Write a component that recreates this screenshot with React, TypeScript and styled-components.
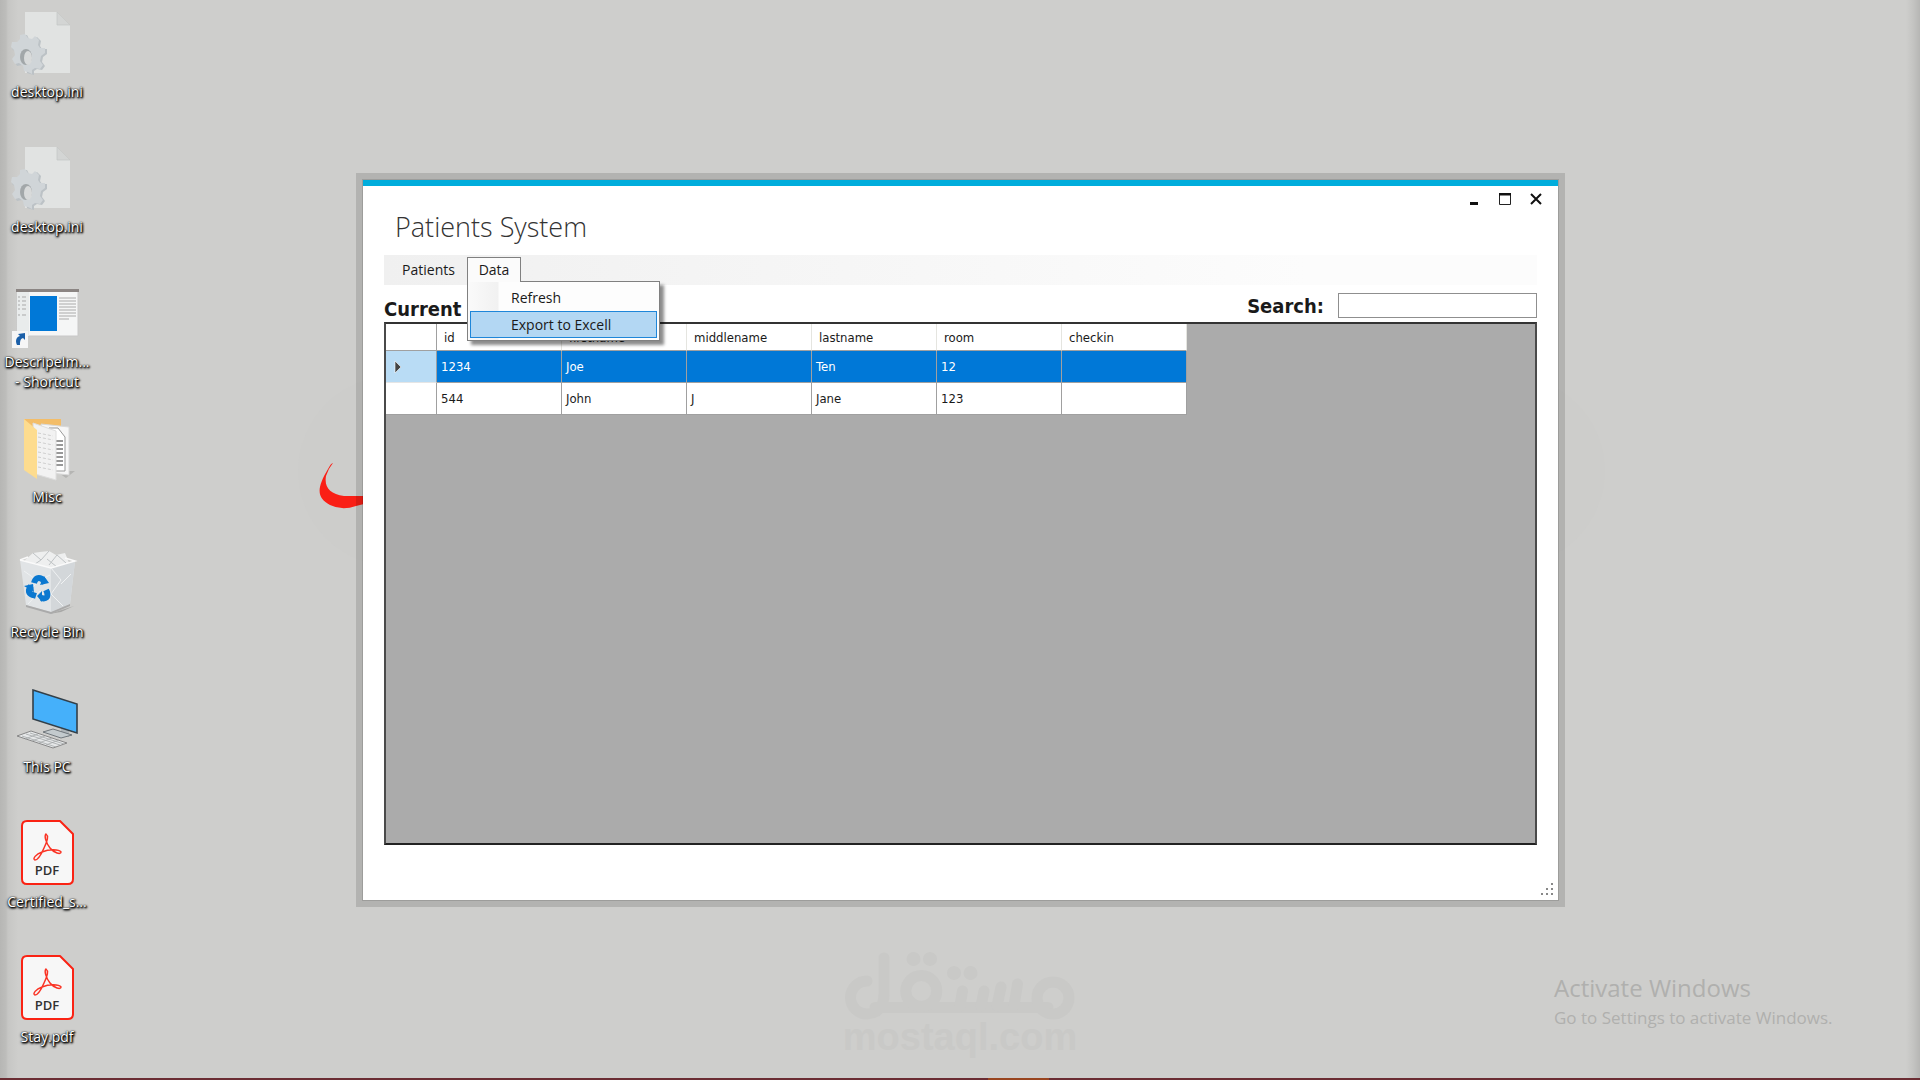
import React from 'react';
import styled, { createGlobalStyle } from 'styled-components';

const ui = '"Open Sans", "Noto Sans", sans-serif';
const tahoma = '"DejaVu Sans Condensed", "DejaVu Sans", sans-serif';

const GlobalStyle = createGlobalStyle`
  * { box-sizing: border-box; }
  body { margin: 0; background: #cececc; font-family: ${ui}; color: #1a1a1a; }
  button, input { font: inherit; color: inherit; }
`;

const Desktop = styled.main`
  position: relative;
  display: flex;
  flex-direction: column;
  height: 100vh;
  overflow: hidden;
  background: linear-gradient(90deg, #b6b6b4 0, #bdbdbb 6px, #c6c6c4 8px, #cececc 18px, #cececc calc(100% - 14px), #c4c4c2 calc(100% - 7px), #b6b6b4 100%);
`;

const IconColumn = styled.nav`
  display: grid;
  grid-auto-rows: 135px;
  width: 94px;
  flex: 1;
  min-height: 0;
`;

const Shortcut = styled.a`
  display: flex;
  flex-direction: column;
  align-items: center;
  padding-top: 8px;
  color: #fff;
  font-size: 14px;
  line-height: 20px;
  text-align: center;
  text-decoration: none;
  white-space: pre-line;
  text-shadow: 0 0 1px #000, 1px 1px 2px #000, 1px 1px 2px #000, 0 1px 3px #000;
  svg { display: block; width: 72px; height: 72px; margin-bottom: 2px; }
`;

const Taskbar = styled.footer`
  display: flex;
  flex: none;
  height: 2px;
  background: #6b2d33;
`;

const ActiveTask = styled.span`
  width: 61px;
  margin-left: 988px;
  background: #99451f;
`;

const WallpaperBand = styled.div`
  position: absolute;
  left: 298px;
  right: 315px;
  top: 376px;
  height: 190px;
  border-radius: 95px;
  background: #cdcdcb;
`;

const Swoosh = styled.svg`
  position: absolute;
  left: 316px;
  top: 460px;
  width: 56px;
  height: 52px;
`;

const Watermark = styled.div`
  position: absolute;
  left: 840px;
  top: 948px;
  width: 240px;
  color: #c9c9c7;
  text-align: center;
  svg { display: block; width: 240px; height: 76px; }
`;

const WatermarkText = styled.div`
  margin-top: -9px;
  font: bold 38px/44px "Liberation Sans", sans-serif;
`;

const Activation = styled.aside`
  position: absolute;
  left: 1554px;
  top: 970px;
  color: #b0b0ae;
`;

const ActivationTitle = styled.div`
  font-size: 24px;
  line-height: 36px;
`;

const ActivationText = styled.div`
  font-size: 17px;
  line-height: 24px;
`;

const AppWindow = styled.section`
  position: absolute;
  left: 363px;
  top: 180px;
  display: flex;
  flex-direction: column;
  width: 1195px;
  height: 720px;
  padding: 0 21px;
  background: #fff;
  border-top: 6px solid #00addc;
  box-shadow: 0 0 0 1px rgba(0, 0, 0, 0.12), 0 0 0 7px rgba(0, 0, 0, 0.13);
`;

const Caption = styled.div`
  display: flex;
  justify-content: flex-end;
  gap: 2px;
  height: 25px;
  margin-right: -13px;
`;

const CaptionButton = styled.button`
  width: 29px;
  height: 25px;
  padding: 0;
  border: 0;
  background: none;
  svg { display: block; margin: 6px auto; }
`;

const Title = styled.h1`
  margin: 0 0 12px 11px;
  font-size: 27px;
  font-weight: 300;
  line-height: 32px;
  color: #333;
`;

const MenuBar = styled.div`
  display: flex;
  height: 30px;
  padding: 2px 6px 3px;
  background: linear-gradient(90deg, #f0f0f0, #fcfcfc 80%);
  font-size: 14px;
`;

const MenuSlot = styled.div`
  position: relative;
`;

const MenuButton = styled.button<{ $open?: boolean }>`
  height: 25px;
  width: ${(p) => (p.$open ? '54px' : '77px')};
  padding: 0;
  border: 1px solid ${(p) => (p.$open ? '#808080' : 'transparent')};
  border-bottom: 0;
  background: ${(p) => (p.$open ? '#fbfbfb' : 'none')};
  line-height: 24px;
`;

const Menu = styled.div`
  position: absolute;
  z-index: 2;
  left: 0;
  top: 24px;
  display: grid;
  width: 193px;
  padding: 2px;
  border: 1px solid #808080;
  background: linear-gradient(90deg, #fafafa, #f1f1f1 30px, #fdfdfd 31px);
  box-shadow: 4px 4px 3px rgba(0, 0, 0, 0.45);
  &::before {
    content: '';
    position: absolute;
    left: 0;
    top: -1px;
    width: 52px;
    height: 1px;
    background: #fbfbfb;
  }
`;

const MenuItem = styled.button<{ $active?: boolean }>`
  height: 27px;
  padding: 0 0 0 40px;
  border: 1px solid ${(p) => (p.$active ? '#1e86d9' : 'transparent')};
  background: ${(p) => (p.$active ? '#b3d7f3' : 'none')};
  line-height: 24px;
  text-align: left;
`;

const Toolbar = styled.div`
  display: flex;
  justify-content: space-between;
  height: 37px;
  font: bold 20px/26px ${tahoma};
`;

const GridTitle = styled.h2`
  margin: 11px 0 0;
  font: inherit;
`;

const SearchField = styled.label`
  display: flex;
  gap: 14px;
  padding-top: 8px;
`;

const SearchInput = styled.input`
  width: 199px;
  height: 25px;
  padding: 0 4px;
  border: 1px solid #8f8f8f;
  background: #fff;
  font: 15px ${tahoma};
`;

const GridPane = styled.div`
  flex: 1;
  border: 2px solid #4a4a4a;
  border-top-color: #333;
  border-bottom-color: #222;
  background: #ababab;
`;

const DataGrid = styled.table`
  width: 801px;
  table-layout: fixed;
  border-collapse: separate;
  border-spacing: 0;
  background: #fff;
  font: 13px/18px ${tahoma};
`;

const HeadCell = styled.th<{ $corner?: boolean }>`
  width: ${(p) => (p.$corner ? '51px' : '125px')};
  height: 27px;
  padding: 1px 0 0 7px;
  border-right: 1px solid ${(p) => (p.$corner ? '#a0a0a0' : '#e5e5e0')};
  border-bottom: 1px solid #a0a0a0;
  font-weight: normal;
  text-align: left;
`;

const RowHead = styled.th<{ $selected?: boolean }>`
  padding: 0 0 0 8px;
  border-right: 1px solid #a0a0a0;
  border-bottom: 1px solid ${(p) => (p.$selected ? '#e5e5e5' : '#a0a0a0')};
  background: ${(p) => (p.$selected ? '#b9dcf5' : '#fff')};
  svg { display: block; }
`;

const Cell = styled.td<{ $selected?: boolean }>`
  height: 32px;
  padding: 0 0 0 4px;
  border-right: 1px solid #a0a0a0;
  border-bottom: 1px solid #a0a0a0;
  background: ${(p) => (p.$selected ? '#0078d7' : '#fff')};
  color: ${(p) => (p.$selected ? '#fff' : '#1a1a1a')};
`;

const StatusStrip = styled.div`
  display: flex;
  align-items: flex-end;
  justify-content: flex-end;
  height: 55px;
  margin-right: -17px;
  padding-bottom: 4px;
`;

const IniIcon = () => (
  <svg viewBox="0 0 72 72" aria-hidden="true">
    <path d="M14 4H46L59 17V65H14Z" fill="#e1e3e2" />
    <path d="M46 4V17H59Z" fill="#d3d5d4" stroke="#c3c5c4" strokeWidth=".7" />
    <path d="M19 66l-3-1-1-5-4-3-5 1-3-5 3-4-1-5-4-3 1-6 5 0 3-3 1-4 5-1 2 4 4 1 4-3 4 4-1 5 2 3 5 0 0 5-4 3-1 5 3 4-3 4-5-1-3 2 0 4Z" fill="#bcc2c6" />
    <path d="M17 65l-4-1-1-5-4-3-4 1-3-5 3-4-1-5-3-3 1-5 5 0 3-3 0-4 5-1 3 4 4 1 3-3 4 4-1 5 2 3 5 0 0 5-4 3-1 5 3 4-3 4-5-1-3 2 0 4Z" fill="#d0d5d8" transform="translate(0 -1)" />
    <ellipse cx="15" cy="49" rx="6" ry="8" fill="#a2a7a9" />
    <ellipse cx="17" cy="50" rx="4" ry="7" fill="#d8dada" />
  </svg>
);

const AppIcon = () => (
  <svg viewBox="0 0 72 72" aria-hidden="true">
    <path d="M6 12H67V58H6Z" fill="#f5f6f6" stroke="#c8c8c8" />
    <path d="M5 11H68V14H5Z" fill="#8b8583" />
    <path d="M6 14H18V58H6Z" fill="#e9ecec" />
    <path d="M7 19h2m2 0h4M7 23h2m2 0h4M7 27h2m2 0h4M7 31h2m2 0h4M7 37h2m2 0h4" stroke="#a9a9a9" />
    <path d="M19 18H46V53H19Z" fill="#0078d7" />
    <path d="M48 20h17M48 23h17M48 26h17M48 29h17M48 32h17M48 35h17M48 38h17M48 41h10" stroke="#aaa" />
    <path d="M1 53H17V70H1Z" fill="#f6f6f6" />
    <path d="M6 67C4 63 5 59 9 58L7 56 14 55V62L12 60C9 61 9 64 9 67Z" fill="#1b5fa8" />
  </svg>
);

const FolderIcon = () => (
  <svg viewBox="0 0 72 72" aria-hidden="true">
    <path d="M45 58L64 58 55 65Z" fill="#b5b5b3" />
    <path d="M13 6H50V56H20Z" fill="#f3bd68" />
    <path d="M30 11L58 14V62L40 60Z" fill="#f6f6f6" stroke="#d8d8d8" />
    <path d="M38 15H47L54 24V58H40Z" fill="#fff" stroke="#999" />
    <path d="M44 28h8M44 32h8M44 36h8M44 40h8M44 44h8M44 48h8M44 52h8" stroke="#777" strokeWidth="1.4" />
    <path d="M22 10L45 18V67L24 61Z" fill="#f2f2f2" stroke="#dedede" />
    <path d="M27 20l15 3m-15 1l15 3m-15 2l15 3m-15 2l15 3m-15 2l15 3m-15 2l15 3m-15 2l15 3m-15 2l15 3" stroke="#cfcfcf" strokeDasharray="3 2" />
    <path d="M13 6L26 17V66L13 57Z" fill="#fddc8f" />
  </svg>
);

const BinIcon = () => (
  <svg viewBox="0 0 72 72" aria-hidden="true">
    <path d="M38 66L60 59 63 58 50 64Z" fill="#a8a8a6" />
    <path d="M14 12L22 5 29 4 38 3 45 7 54 5 59 17 37 22 16 19Z" fill="#eeefef" />
    <path d="M22 5l8 7 8-9M30 12l-9 6m17-1l8-10 9 8M36 11l10 8" stroke="#bfc3c5" fill="none" />
    <path d="M9 12L40 20 64 13 59 56 40 64 15 57Z" fill="#e1e4e6" />
    <path d="M40 20L64 13 59 56 40 64Z" fill="#d3d7da" />
    <path d="M9 12l31 8 24-7-10-3M9 12l8-3" stroke="#fafafa" strokeWidth="1.5" fill="none" />
    <path d="M13 23l14 10-12 15m12-15l12-6m-22 29l12-13 10 9m1-32l10 12-10 14 12 12m8-32l-10 10" stroke="#f0f2f3" fill="none" />
    <path d="M15 57L40 64 59 56V58L40 66 15 59Z" fill="#aaa" />
    <g fill="none" stroke="#0b78d0" strokeWidth="6">
      <path d="M23 35Q25 28 31 31L34 35" />
      <path d="M20 38Q15 45 22 47L25 48" />
      <path d="M30 50Q38 52 36 44L35 42" />
    </g>
    <path d="M30 38L39 36 34 29ZM14 39L23 37 24 45ZM27 49L32 44V55Z" fill="#0b78d0" transform="translate(-1 -1)" />
  </svg>
);

const PcIcon = () => (
  <svg viewBox="0 0 72 72" aria-hidden="true">
    <path d="M50 42V52L58 54V44Z" fill="#aeb5b9" />
    <path d="M32 49L42 46 61 52 50 55Z" fill="#c3cacd" stroke="#5a6268" strokeWidth=".8" />
    <path d="M22 7L66 21V50L22 36Z" fill="#45b0fa" stroke="#333f48" strokeWidth="1.6" />
    <path d="M6 53L20 48 56 60 42 65Z" fill="#e5e7e8" stroke="#888" />
    <path d="M11 53l34 11M15 51l34 11M19 50l34 11M14 56l13-5m-6 7l13-5m-6 7l13-5m-6 7l13-5" stroke="#a4a8aa" strokeWidth=".8" />
  </svg>
);

const PdfText = styled.text`
  font: 600 13px ${ui};
  fill: #323232;
  text-anchor: middle;
  text-shadow: none;
`;

const PdfIcon = () => (
  <svg viewBox="0 0 72 72" aria-hidden="true">
    <path d="M16 3H49L62 16V61Q62 66 57 66H16Q11 66 11 61V8Q11 3 16 3Z" fill="#f7f7f7" stroke="#fa2314" strokeWidth="2" strokeLinejoin="round" />
    <path d="M35 16C38 18 36 24 33 30 30 37 27 42 24 42 21 41 25 36 31 34 38 31 48 31 50 34 50 37 43 35 39 30 35 25 33 18 35 16Z" fill="none" stroke="#fa3324" strokeWidth="1.5" />
    <PdfText x="36" y="57">PDF</PdfText>
  </svg>
);

const shortcuts = [
  { label: 'desktop.ini', Icon: IniIcon },
  { label: 'desktop.ini', Icon: IniIcon },
  { label: 'DescripeIm...\n- Shortcut', Icon: AppIcon },
  { label: 'Misc', Icon: FolderIcon },
  { label: 'Recycle Bin', Icon: BinIcon },
  { label: 'This PC', Icon: PcIcon },
  { label: 'Certified_s...', Icon: PdfIcon },
  { label: 'Stay.pdf', Icon: PdfIcon },
];

const columns = ['id', 'firstname', 'middlename', 'lastname', 'room', 'checkin'];
const rows = [
  ['1234', 'Joe', '', 'Ten', '12', ''],
  ['544', 'John', 'J', 'Jane', '123', ''],
];

export default function App() {
  return (
    <Desktop>
      <GlobalStyle />
      <WallpaperBand />
      <IconColumn aria-label="Desktop">
        {shortcuts.map(({ label, Icon }, i) => (
          <Shortcut href="#" key={i}>
            <Icon />
            {label}
          </Shortcut>
        ))}
      </IconColumn>

      <Swoosh viewBox="0 0 56 52" aria-hidden="true">
        <path d="M17 3Q15 3 12 9C0 29 1 38 14 45Q26 51 40 46L56 42V33L47 36H28C14 34 8 27 10 16Q12 9 17 3Z" fill="#fa1f16" />
      </Swoosh>

      <Watermark>
        <svg viewBox="840 948 240 76" fill="none" stroke="currentColor" strokeWidth="11" strokeLinecap="round" aria-hidden="true">
          <path d="M867 981A16.500 16.500 0 1 0 867 1014Q884 1013 884 994V958M875 1007.500H1048" />
          <circle cx="921.300" cy="991" r="15.500" />
          <circle cx="1053" cy="998" r="16" />
          <path d="M962.500 991L960 1006M984 991L981 1006M1001 987L997 1006M1017.500 984L1014 1006" />
          <g fill="currentColor" stroke="none">
            <circle cx="913.500" cy="959" r="7" />
            <circle cx="930" cy="959" r="7" />
            <circle cx="954" cy="973" r="7" />
            <circle cx="970.500" cy="973" r="7" />
          </g>
        </svg>
        <WatermarkText>mostaql.com</WatermarkText>
      </Watermark>

      <Activation>
        <ActivationTitle>Activate Windows</ActivationTitle>
        <ActivationText>Go to Settings to activate Windows.</ActivationText>
      </Activation>

      <AppWindow>
        <Caption>
          <CaptionButton aria-label="Minimize">
            <svg width="14" height="14"><path d="M3 10h8v3H3z" fill="#111" /></svg>
          </CaptionButton>
          <CaptionButton aria-label="Maximize">
            <svg width="14" height="14"><path d="M1.500 2V12.500H12.500V2" fill="none" stroke="#222" /><path d="M1 1H13V3.500H1z" fill="#111" /></svg>
          </CaptionButton>
          <CaptionButton aria-label="Close">
            <svg width="14" height="14"><path d="M2 2L12 12M12 2L2 12" stroke="#111" strokeWidth="2" /></svg>
          </CaptionButton>
        </Caption>
        <Title>Patients System</Title>
        <MenuBar>
          <MenuButton>Patients</MenuButton>
          <MenuSlot>
            <MenuButton $open aria-expanded="true">Data</MenuButton>
            <Menu>
              <MenuItem>Refresh</MenuItem>
              <MenuItem $active>Export to Excell</MenuItem>
            </Menu>
          </MenuSlot>
        </MenuBar>
        <Toolbar>
          <GridTitle>Current</GridTitle>
          <SearchField>
            Search:
            <SearchInput type="text" />
          </SearchField>
        </Toolbar>
        <GridPane>
          <DataGrid>
            <thead>
              <tr>
                <HeadCell $corner />
                {columns.map((c) => (
                  <HeadCell key={c} scope="col">{c}</HeadCell>
                ))}
              </tr>
            </thead>
            <tbody>
              {rows.map((row, r) => (
                <tr key={r}>
                  <RowHead $selected={r === 0} scope="row">
                    {r === 0 && (
                      <svg width="8" height="14" aria-label="Current row">
                        <path d="M1 1L7 7L1 13Z" fill="#444" stroke="#fff" strokeWidth=".6" />
                      </svg>
                    )}
                  </RowHead>
                  {row.map((value, c) => (
                    <Cell key={c} $selected={r === 0}>{value}</Cell>
                  ))}
                </tr>
              ))}
            </tbody>
          </DataGrid>
        </GridPane>
        <StatusStrip>
          <svg width="14" height="14" fill="#888" aria-hidden="true">
            <path d="M11 1h2v2h-2zM6 6h2v2H6zM11 6h2v2h-2zM1 11h2v2H1zM6 11h2v2H6zM11 11h2v2h-2z" />
          </svg>
        </StatusStrip>
      </AppWindow>
      <Taskbar>
        <ActiveTask />
      </Taskbar>
    </Desktop>
  );
}
